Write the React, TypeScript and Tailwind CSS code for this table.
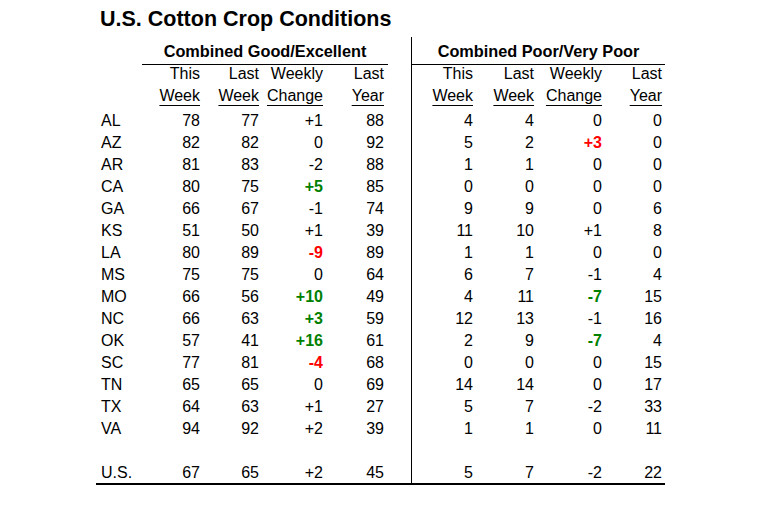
import React from "react";

type V = { t: string; c?: "g" | "r" };
type Row = { s: string; l: V[]; r: V[] };

const p = (x: string): V => {
  if (x.startsWith("g")) return { t: x.slice(1), c: "g" };
  if (x.startsWith("r")) return { t: x.slice(1), c: "r" };
  return { t: x };
};

const raw: [string, string[], string[]][] = [
  ["AL", ["78", "77", "+1", "88"], ["4", "4", "0", "0"]],
  ["AZ", ["82", "82", "0", "92"], ["5", "2", "r+3", "0"]],
  ["AR", ["81", "83", "-2", "88"], ["1", "1", "0", "0"]],
  ["CA", ["80", "75", "g+5", "85"], ["0", "0", "0", "0"]],
  ["GA", ["66", "67", "-1", "74"], ["9", "9", "0", "6"]],
  ["KS", ["51", "50", "+1", "39"], ["11", "10", "+1", "8"]],
  ["LA", ["80", "89", "r-9", "89"], ["1", "1", "0", "0"]],
  ["MS", ["75", "75", "0", "64"], ["6", "7", "-1", "4"]],
  ["MO", ["66", "56", "g+10", "49"], ["4", "11", "g-7", "15"]],
  ["NC", ["66", "63", "g+3", "59"], ["12", "13", "-1", "16"]],
  ["OK", ["57", "41", "g+16", "61"], ["2", "9", "g-7", "4"]],
  ["SC", ["77", "81", "r-4", "68"], ["0", "0", "0", "15"]],
  ["TN", ["65", "65", "0", "69"], ["14", "14", "0", "17"]],
  ["TX", ["64", "63", "+1", "27"], ["5", "7", "-2", "33"]],
  ["VA", ["94", "92", "+2", "39"], ["1", "1", "0", "11"]],
];

const rows: Row[] = raw.map(([s, l, r]) => ({ s, l: l.map(p), r: r.map(p) }));

const LW = ["w-[58px]", "w-[59px]", "w-[64px]", "w-[61px]"];
const RW = ["w-[61px]", "w-[61px]", "w-[68px]", "w-[60px]"];

function Cell({ v, w }: { v?: V; w: string }) {
  const cls =
    v?.c === "g"
      ? "font-bold text-[#008000]"
      : v?.c === "r"
      ? "font-bold text-[#ff0000]"
      : "";
  return (
    <div className={`${w} shrink-0 text-right whitespace-nowrap`}>
      <span className={cls}>{v ? v.t : ""}</span>
    </div>
  );
}

function Line({
  state,
  l,
  r,
  h,
}: {
  state: string;
  l: (V | undefined)[];
  r: (V | undefined)[];
  h: string;
}) {
  return (
    <div className={`flex ${h}`}>
      <div className="flex w-[315px] shrink-0 items-center">
        <div className="w-[46px] shrink-0 pl-[5px]">{state}</div>
        {LW.map((w, i) => (
          <Cell key={i} v={l[i]} w={w} />
        ))}
      </div>
      <div className="flex w-[254px] shrink-0 items-center border-l border-black">
        {RW.map((w, i) => (
          <Cell key={i} v={r[i]} w={w} />
        ))}
      </div>
    </div>
  );
}

function HeadCell({ text, w, u }: { text: string; w: string; u?: boolean }) {
  return (
    <div className={`${w} shrink-0 text-right whitespace-nowrap`}>
      <span className={u ? "underline underline-offset-[4px] decoration-1" : ""}>{text}</span>
    </div>
  );
}

export default function App() {
  const top = ["This", "Last", "Weekly", "Last"];
  const bottom = ["Week", "Week", "Change", "Year"];
  return (
    <div
      className="w-[763px] h-[516px] bg-white text-black text-[16px] overflow-hidden"
      style={{ fontFamily: '"Liberation Sans", Arial, sans-serif' }}
    >
      <div className="h-[37px] pt-[5px] pl-[100px] text-[21.5px] font-bold leading-[28px] whitespace-nowrap">
        U.S. Cotton Crop Conditions
      </div>
      <div className="ml-[96px] w-[569px] border-b-2 border-black">
        {/* group headers */}
        <div className="flex h-[28px] text-[16.3px]">
          <div className="w-[315px] shrink-0">
            <div className="ml-[46px] w-[246px] h-[28px] border-b border-black pt-[2px] text-center font-bold leading-[25px] whitespace-nowrap">
              Combined Good/Excellent
            </div>
          </div>
          <div className="w-[254px] shrink-0 border-l border-black">
            <div className="h-[28px] border-b border-black pt-[2px] text-center font-bold leading-[25px] whitespace-nowrap">
              Combined Poor/Very Poor
            </div>
          </div>
        </div>
        {/* header row 1 */}
        <div className="flex h-[18px] leading-[18px]">
          <div className="flex w-[315px] shrink-0">
            <div className="w-[46px] shrink-0" />
            {LW.map((w, i) => (
              <HeadCell key={i} text={top[i]} w={w} />
            ))}
          </div>
          <div className="flex w-[254px] shrink-0 border-l border-black">
            {RW.map((w, i) => (
              <HeadCell key={i} text={top[i]} w={w} />
            ))}
          </div>
        </div>
        {/* header row 2 */}
        <div className="flex h-[27px] pt-[2px] leading-[22px]">
          <div className="flex w-[315px] shrink-0">
            <div className="w-[46px] shrink-0" />
            {LW.map((w, i) => (
              <HeadCell key={i} text={bottom[i]} w={w} u />
            ))}
          </div>
          <div className="flex w-[254px] shrink-0 border-l border-black -mt-[2px] pt-[2px]">
            {RW.map((w, i) => (
              <HeadCell key={i} text={bottom[i]} w={w} u />
            ))}
          </div>
        </div>
        {rows.map((row) => (
          <Line key={row.s} state={row.s} l={row.l} r={row.r} h="h-[22px] leading-[22px]" />
        ))}
        <Line state="" l={[]} r={[]} h="h-[22px] leading-[22px]" />
        <Line
          state="U.S."
          l={["67", "65", "+2", "45"].map(p)}
          r={["5", "7", "-2", "22"].map(p)}
          h="h-[21px] leading-[21px]"
        />
      </div>
    </div>
  );
}
